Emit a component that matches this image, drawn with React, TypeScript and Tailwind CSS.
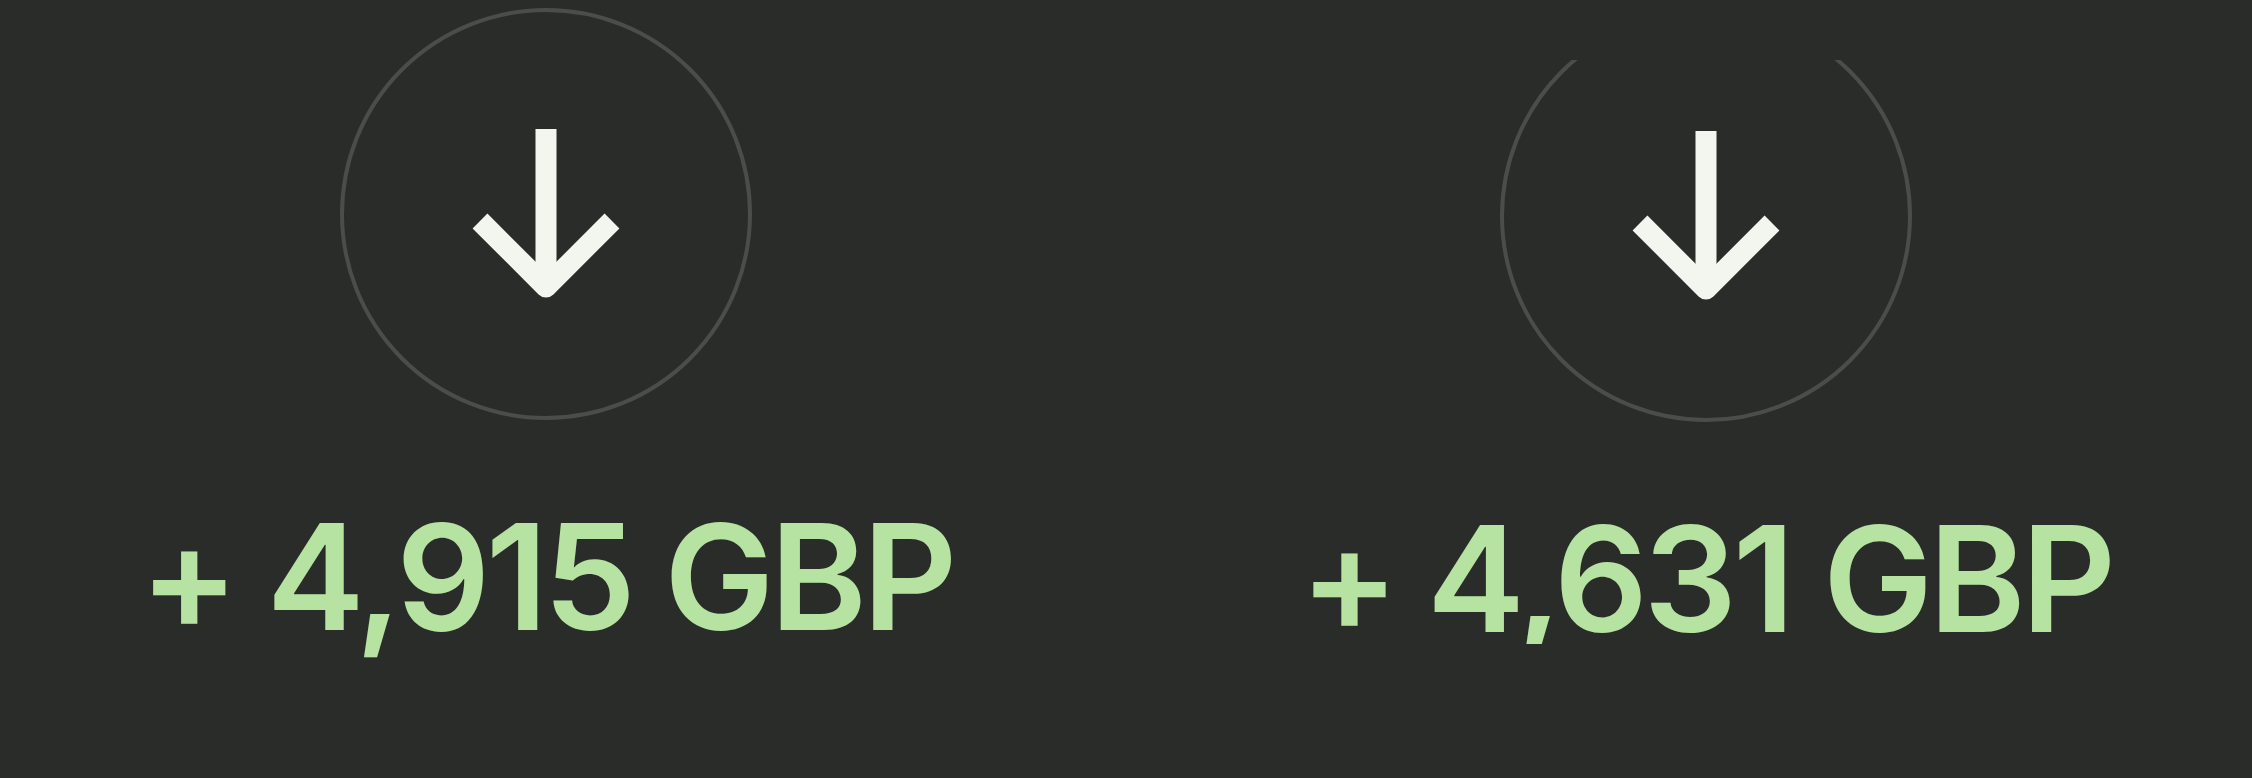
export default function App() {
  const ArrowDown = () => (
    <svg width="160" height="180" viewBox="0 0 160 180" fill="none" stroke="#f3f5ef" strokeWidth={21} strokeLinecap="butt" strokeLinejoin="round">
      <path d="M80 5V162" />
      <path d="M14 97L80 163L146 97" />
    </svg>
  )

  const Circle = () => (
    <div className="w-[412px] h-[412px] shrink-0 rounded-full border-4 border-[#4c4d49] flex items-center justify-center">
      <ArrowDown />
    </div>
  )

  const Amount = ({ value }: { value: string }) => (
    <p className="mt-[83px] text-[147px] leading-none font-semibold tracking-[-0.03em] text-[#b6e3a1] whitespace-nowrap [font-family:Inter,'Noto_Sans',sans-serif]">
      {value}
    </p>
  )

  return (
    <div className="w-[2252px] h-[778px] bg-[#2a2c29] overflow-hidden flex items-start gap-[67px]">
      {/* first transfer */}
      <div className="w-[1096px] pt-[8px] flex flex-col items-center">
        <Circle />
        <Amount value="+ 4,915 GBP" />
      </div>

      {/* second transfer, partly scrolled out of its list */}
      <div className="w-[1096px] mt-[60px] h-[584px] overflow-hidden">
        <div className="-mt-[50px] flex flex-col items-center">
          <Circle />
          <Amount value="+ 4,631 GBP" />
        </div>
      </div>
    </div>
  )
}
